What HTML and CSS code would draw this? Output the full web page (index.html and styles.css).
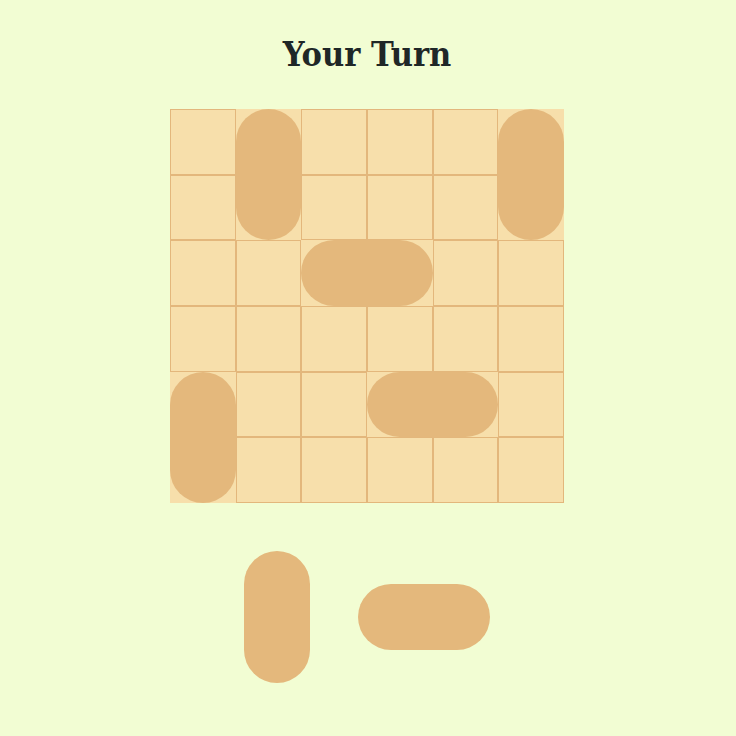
FILE: index.html
```html
<!DOCTYPE html>
<html>
<head>
<meta charset="utf-8">
<link rel="stylesheet" href="styles.css">
</head>
<body>
<main class="game">
  <h1 class="title">Your Turn</h1>
  <div class="board">
    <div class="piece vert" style="grid-area: 1 / 2 / 3 / 3"><span class="pill"></span></div>
    <div class="piece vert" style="grid-area: 1 / 6 / 3 / 7"><span class="pill"></span></div>
    <div class="piece horiz" style="grid-area: 3 / 3 / 4 / 5"><span class="pill"></span></div>
    <div class="piece horiz" style="grid-area: 5 / 4 / 6 / 6"><span class="pill"></span></div>
    <div class="piece vert" style="grid-area: 5 / 1 / 7 / 2"><span class="pill"></span></div>
    <div class="cell"></div><div class="cell"></div><div class="cell"></div><div class="cell"></div>
    <div class="cell"></div><div class="cell"></div><div class="cell"></div><div class="cell"></div>
    <div class="cell"></div><div class="cell"></div><div class="cell"></div><div class="cell"></div>
    <div class="cell"></div><div class="cell"></div><div class="cell"></div><div class="cell"></div>
    <div class="cell"></div><div class="cell"></div><div class="cell"></div><div class="cell"></div>
    <div class="cell"></div><div class="cell"></div><div class="cell"></div><div class="cell"></div>
    <div class="cell"></div><div class="cell"></div>
  </div>
  <div class="tray">
    <span class="pill tray-vert"></span>
    <span class="pill tray-horiz"></span>
  </div>
</main>
</body>
</html>
```
FILE: styles.css
```css
html, body {
  margin: 0;
  padding: 0;
  background: #f2fdd3;
}
.game {
  display: flex;
  flex-direction: column;
  align-items: center;
  padding-top: 34px;
  padding-right: 2px;
}
.title {
  margin: 0;
  font-family: "DejaVu Serif Condensed", "Liberation Serif", serif;
  font-weight: bold;
  font-stretch: condensed;
  font-size: 34px;
  line-height: 40px;
  color: #1f2727;
}
.board {
  margin-top: 35px;
  width: 394px;
  height: 394px;
  display: grid;
  grid-template-columns: repeat(6, 1fr);
  grid-template-rows: repeat(6, 1fr);
}
.cell {
  box-sizing: border-box;
  background: #f7dfab;
  border: 1px solid #e3b77c;
}
.piece {
  background: #f7dfab;
  display: flex;
}
.pill {
  display: block;
  flex: 1;
  background: #e4b87c;
  border-radius: 33px;
}
.tray {
  margin-top: 48px;
  display: flex;
  align-items: center;
  gap: 48px;
}
.tray-vert {
  flex: none;
  width: 66px;
  height: 132px;
}
.tray-horiz {
  flex: none;
  width: 132px;
  height: 66px;
}
```
